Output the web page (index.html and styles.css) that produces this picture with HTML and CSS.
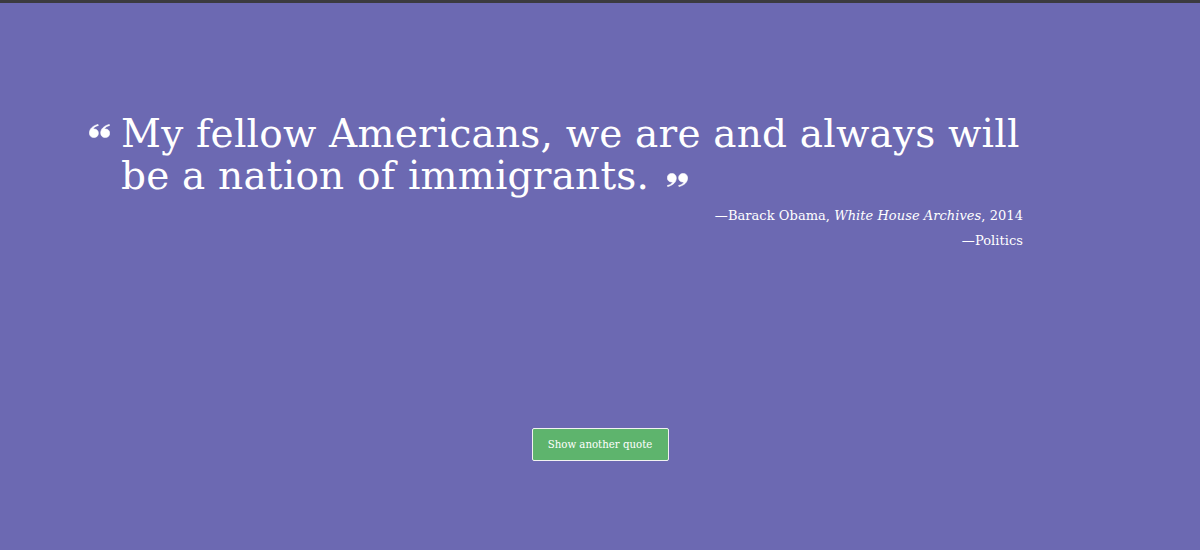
FILE: index.html
```html
<!DOCTYPE html>
<html lang="en">
<head>
<meta charset="utf-8">
<title>Random Quote</title>
<link rel="stylesheet" href="styles.css">
</head>
<body>
<div class="topbar"></div>
<main class="page">
  <section class="quote-box">
    <blockquote class="quote">
      <svg class="qmark qmark-open" viewBox="0 0 21 14" aria-hidden="true"><path d="M9 0.4C4 1.7 0.4 4.7 0.4 9c0 2.8 1.9 4.6 4.5 4.6 2.6 0 4.5-1.9 4.5-4.4 0-2.5-1.8-4.2-4.2-4.2-.4 0-.8 0-1.1.1C4.6 3.4 6.5 2.2 9.4 1.4z M20.3 0.4c-5 1.3-8.6 4.3-8.6 8.6 0 2.8 1.9 4.6 4.5 4.6 2.6 0 4.5-1.9 4.5-4.4 0-2.5-1.8-4.2-4.2-4.2-.4 0-.8 0-1.1.1.5-1.7 2.4-2.9 5.3-3.7z" fill="#fff" stroke="#fff" stroke-width="0.6" stroke-linejoin="round"/></svg>
      <p class="quote-text">My fellow Americans, we are and always will be a nation of immigrants.<svg class="qmark qmark-close" viewBox="0 0 21 14" aria-hidden="true"><path d="M9 0.4C4 1.7 0.4 4.7 0.4 9c0 2.8 1.9 4.6 4.5 4.6 2.6 0 4.5-1.9 4.5-4.4 0-2.5-1.8-4.2-4.200-4.2-.4 0-.8 0-1.1.1C4.6 3.4 6.5 2.2 9.4 1.4z M20.3 0.4c-5 1.3-8.6 4.3-8.6 8.6 0 2.8 1.9 4.6 4.5 4.6 2.6 0 4.5-1.9 4.5-4.4 0-2.5-1.8-4.2-4.2-4.2-.4 0-.8 0-1.1.1.5-1.7 2.4-2.9 5.3-3.7z" fill="#fff" stroke="#fff" stroke-width="0.6" stroke-linejoin="round"/></svg></p>
    </blockquote>
    <p class="source">—Barack Obama, <cite>White House Archives</cite>, 2014</p>
    <p class="category">—Politics</p>
  </section>
  <div class="actions">
    <button class="btn" type="button">Show another quote</button>
  </div>
</main>
</body>
</html>
```
FILE: styles.css
```css
html, body {
  margin: 0;
  padding: 0;
}
body {
  background: #6c69b2;
  color: #fff;
  font-family: "DejaVu Serif", Georgia, serif;
  height: 550px;
  overflow: hidden;
}
.topbar {
  height: 3px;
  background: #3c3b3f;
}
.page {
  display: flex;
  flex-direction: column;
}
.quote-box {
  width: 934px;
  margin-left: 89px;
  padding-top: 110px;
}
.quote {
  margin: 0;
  display: flex;
  align-items: flex-start;
}
.qmark {
  width: 21px;
  height: 14px;
  flex: none;
}
.qmark-open {
  margin-top: 11px;
  margin-right: 11px;
}
.qmark-close {
  margin-left: 18px;
  vertical-align: 2px;
  transform: rotate(180deg);
}
.quote-text {
  margin: 0;
  font-size: 39px;
  line-height: 42px;
  letter-spacing: 0.2px;
}
.source, .category {
  margin: 0;
  text-align: right;
  font-size: 13px;
  letter-spacing: 0.05px;
}
.source {
  margin-top: 9px;
  line-height: 20px;
}
.category {
  margin-top: 5px;
  line-height: 20px;
}
.actions {
  display: flex;
  justify-content: center;
  margin-top: 177px;
}
.btn {
  background: #5eb46d;
  color: #fff;
  border: 1.5px solid #f2f2f2;
  border-radius: 2px;
  width: 137px;
  height: 33px;
  font-family: "DejaVu Serif", serif;
  font-size: 10.2px;
  padding: 0;
}
```
